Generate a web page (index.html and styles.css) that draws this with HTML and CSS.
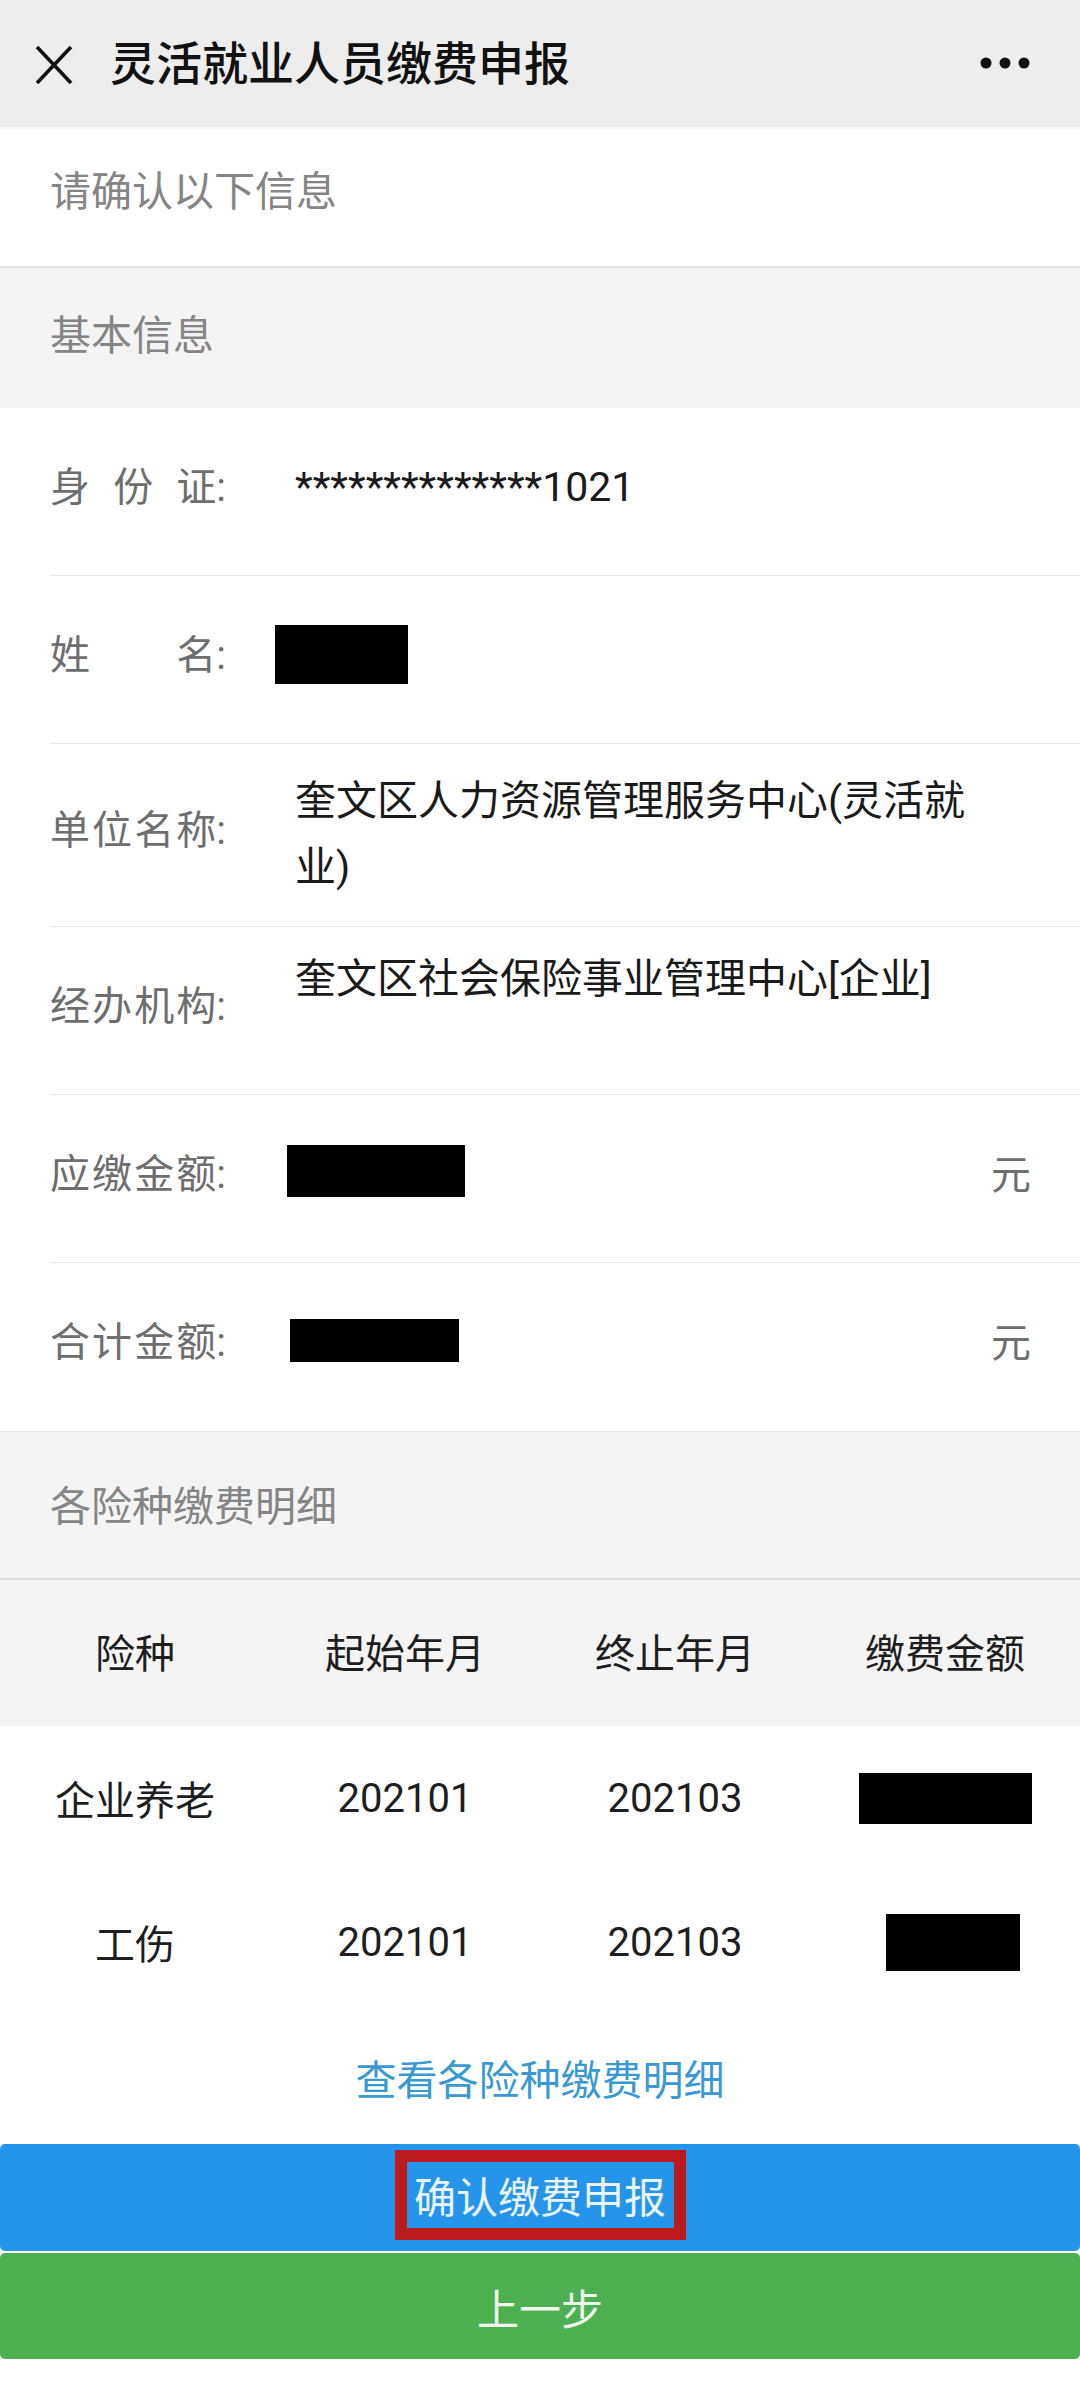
FILE: index.html
```html
<!DOCTYPE html>
<html lang="zh-CN">
<head>
<meta charset="utf-8">
<title>灵活就业人员缴费申报</title>
<link rel="stylesheet" href="styles.css">
</head>
<body>
<div class="page">
  <header class="topbar">
    <svg class="close-icon" width="40" height="40" viewBox="0 0 40 40"><path d="M3 2 L37 38 M37 2 L3 38" stroke="#111" stroke-width="3.6" fill="none"/></svg>
    <h1 class="title">灵活就业人员缴费申报</h1>
    <svg class="more-icon" width="50" height="14" viewBox="0 0 50 14"><circle cx="6" cy="7" r="5.5" fill="#111"/><circle cx="25" cy="7" r="5.5" fill="#111"/><circle cx="44" cy="7" r="5.5" fill="#111"/></svg>
  </header>

  <div class="notice">请确认以下信息</div>
  <div class="section-title section-title--basic">基本信息</div>

  <div class="info-list">
    <div class="info-row">
      <div class="label"><span>身</span><span>份</span><span>证:</span></div>
      <div class="value value--id">**************1021</div>
    </div>
    <div class="info-row">
      <div class="label"><span>姓</span><span>名:</span></div>
      <div class="value"><span class="redact redact--name"></span></div>
    </div>
    <div class="info-row">
      <div class="label"><span>单</span><span>位</span><span>名</span><span>称:</span></div>
      <div class="value value--multi">奎文区人力资源管理服务中心(灵活就业)</div>
    </div>
    <div class="info-row">
      <div class="label"><span>经</span><span>办</span><span>机</span><span>构:</span></div>
      <div class="value value--top">奎文区社会保险事业管理中心[企业]</div>
    </div>
    <div class="info-row">
      <div class="label"><span>应</span><span>缴</span><span>金</span><span>额:</span></div>
      <div class="value"><span class="redact redact--due"></span></div>
      <div class="unit">元</div>
    </div>
    <div class="info-row info-row--last">
      <div class="label"><span>合</span><span>计</span><span>金</span><span>额:</span></div>
      <div class="value"><span class="redact redact--total"></span></div>
      <div class="unit">元</div>
    </div>
  </div>

  <div class="section-title section-title--detail">各险种缴费明细</div>

  <div class="table">
    <div class="table-head">
      <div class="cell">险种</div>
      <div class="cell">起始年月</div>
      <div class="cell">终止年月</div>
      <div class="cell">缴费金额</div>
    </div>
    <div class="table-row">
      <div class="cell">企业养老</div>
      <div class="cell">202101</div>
      <div class="cell">202103</div>
      <div class="cell"><span class="redact redact--row1"></span></div>
    </div>
    <div class="table-row">
      <div class="cell">工伤</div>
      <div class="cell">202101</div>
      <div class="cell">202103</div>
      <div class="cell"><span class="redact redact--row2"></span></div>
    </div>
  </div>

  <div class="link-wrap"><a class="detail-link">查看各险种缴费明细</a></div>

  <div class="actions">
    <button class="btn btn--primary"><span class="highlight">确认缴费申报</span></button>
    <button class="btn btn--back">上一步</button>
  </div>
</div>
</body>
</html>
```

FILE: styles.css
```css
* { box-sizing: border-box; }

html, body {
  margin: 0;
  padding: 0;
  background: #ffffff;
}

body {
  width: 1080px;
  font-family: Roboto, "Noto Sans CJK SC", "Noto Sans", sans-serif;
  color: #1c1c1c;
}

.page {
  width: 1080px;
  min-height: 2398px;
  display: flex;
  flex-direction: column;
  background: #fff;
}

/* top bar */
.topbar {
  height: 127px;
  background: #ededed;
  display: flex;
  align-items: center;
  padding: 0 0 0 34px;
  box-shadow: 0 2px 3px rgba(0,0,0,0.05);
  position: relative;
  z-index: 1;
}

.close-icon {
  flex: none;
  width: 40px;
  height: 40px;
  margin-top: 2px;
}

.title {
  margin: 0 0 0 36px;
  font-size: 46px;
  font-weight: 500;
  color: #111;
  letter-spacing: 0;
  line-height: 1;
  flex: 1;
}

.more-icon {
  flex: none;
  margin-right: 50px;
  margin-top: -2px;
}

/* notice */
.notice {
  height: 141px;
  display: flex;
  align-items: center;
  padding: 0 0 18px 50px;
  font-size: 41px;
  color: #858585;
  border-bottom: 2px solid #e4e4e4;
}

.section-title {
  background: #f4f4f4;
  display: flex;
  align-items: center;
  padding-left: 50px;
  font-size: 41px;
  color: #858585;
}

.section-title--basic {
  height: 140px;
  padding-bottom: 12px;
}

.section-title--detail {
  height: 149px;
  border-top: 1px solid #e6e6e6;
  border-bottom: 2px solid #dcdcdc;
  padding-bottom: 4px;
}

/* info list */
.info-list {
  margin-left: 50px;
}

.info-row {
  min-height: 168px;
  display: flex;
  align-items: center;
  padding: 24px 49px 24px 0;
  border-bottom: 1px solid #e8e8e8;
}

.info-row--last {
  border-bottom: none;
}

.label {
  flex: none;
  width: 176px;
  display: flex;
  justify-content: space-between;
  font-size: 40px;
  line-height: 1.2;
  color: #6e6e6e;
  margin-top: -8px;
}

.value {
  flex: 1;
  margin-left: 69px;
  font-size: 41px;
  line-height: 64px;
  color: #1a1a1a;
  min-width: 0;
  display: flex;
  align-items: center;
}

.value--id {
  margin-top: -10px;
  letter-spacing: 0;
}

.value--multi {
  display: block;
  line-height: 66px;
  padding: 0 30px 2px 0;
}

.value--top {
  display: block;
  align-self: flex-start;
  margin-top: -4px;
}

.unit {
  flex: none;
  font-size: 40px;
  color: #6e6e6e;
  margin-top: -14px;
}

.redact {
  display: inline-block;
  background: #000;
}

.redact--name {
  width: 133px;
  height: 59px;
  margin-left: -20px;
  margin-top: -10px;
}

.redact--due {
  width: 178px;
  height: 52px;
  margin-left: -8px;
  margin-top: -16px;
}

.redact--total {
  width: 169px;
  height: 43px;
  margin-left: -5px;
  margin-top: -14px;
}

/* table */
.table {
  display: flex;
  flex-direction: column;
}

.table-head,
.table-row {
  display: grid;
  grid-template-columns: repeat(4, 1fr);
  align-items: center;
}

.table-head {
  height: 146px;
  background: #f4f4f4;
  padding-bottom: 4px;
}

.table-row {
  height: 144px;
  background: #fff;
}

.cell {
  text-align: center;
  font-size: 40px;
  color: #1e1e1e;
  display: flex;
  justify-content: center;
  align-items: center;
}

.redact--row1 {
  width: 173px;
  height: 51px;
}

.redact--row2 {
  width: 134px;
  height: 57px;
  margin-left: 16px;
}

/* link */
.link-wrap {
  height: 130px;
  display: flex;
  justify-content: center;
  align-items: center;
  padding-bottom: 4px;
}

.detail-link {
  font-size: 41px;
  color: #3a99d4;
  text-decoration: none;
}

/* buttons */
.actions {
  display: flex;
  flex-direction: column;
  gap: 2px;
}

.btn {
  display: flex;
  justify-content: center;
  align-items: center;
  width: 1080px;
  border: none;
  border-radius: 5px;
  margin: 0;
  font-family: Roboto, "Noto Sans CJK SC", sans-serif;
  font-size: 42px;
  padding: 0;
}

.btn--primary {
  height: 107px;
  background: #2595ec;
  color: #eaf4ff;
}

.btn--back {
  height: 106px;
  background: #4caf50;
  color: #eef8ec;
}

.highlight {
  display: flex;
  align-items: center;
  justify-content: center;
  width: 291px;
  height: 90px;
  border: 12px solid #bd1a1d;
  margin-top: -6px;
}
```
